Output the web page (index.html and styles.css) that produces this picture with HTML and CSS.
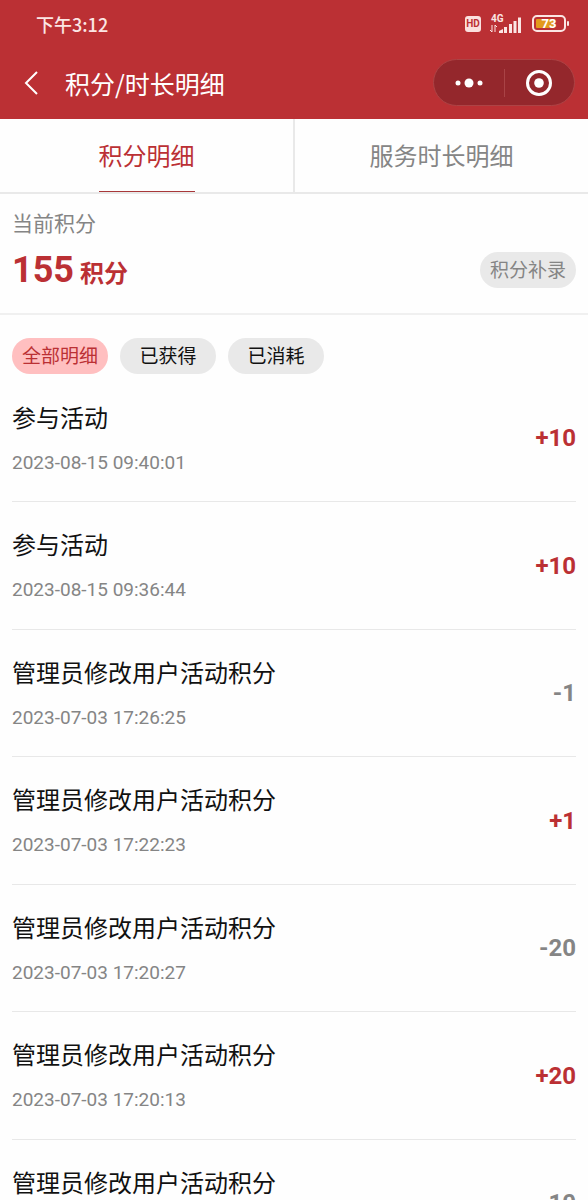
FILE: index.html
```html
<!DOCTYPE html>
<html lang="zh-CN">
<head>
<meta charset="utf-8">
<meta name="viewport" content="width=device-width, initial-scale=1">
<title>积分/时长明细</title>
<link rel="stylesheet" href="styles.css">
</head>
<body>
<div class="app">
  <header class="header">
    <div class="status">
      <span class="time">下午3:12</span>
      <div class="indicators">
        <span class="hd">HD</span>
        <svg class="signal" width="34" height="22" viewBox="0 0 34 22" role="img" aria-label="4G">
          <text class="signal-label" x="2" y="9">4G</text>
          <path d="M3 12v7M1 17l2 2M6 19v-7l2 2" fill="none" stroke="currentColor" stroke-width="1"/>
          <path d="M10 20v-2l4-2v4zM15 20v-6h3v6zM20 20v-9h3v9zM24.500 20v-12h3v12zM29 20v-15.500h3v15.500z" fill="currentColor"/>
        </svg>
        <svg class="battery" width="38" height="20" viewBox="0 0 38 20" role="img" aria-label="73%">
          <rect x="2" y="2" width="32" height="15" rx="4" fill="none" stroke="currentColor" stroke-width="2"/>
          <rect x="5" y="5" width="18" height="9" rx="1" fill="#e39a1c"/>
          <rect x="36" y="7" width="2" height="5" rx="1" fill="currentColor"/>
          <text class="battery-label" x="18" y="14" text-anchor="middle">73</text>
        </svg>
      </div>
    </div>
    <div class="nav">
      <button class="back" type="button" aria-label="返回">
        <svg width="16" height="26" viewBox="0 0 16 26"><path d="M14 2L3 13l11 11" fill="none" stroke="currentColor" stroke-width="2"/></svg>
      </button>
      <h1 class="title">积分/时长明细</h1>
      <div class="capsule">
        <button class="capsule-btn" type="button" aria-label="更多">
          <svg width="30" height="10" viewBox="0 0 30 10" fill="currentColor"><circle cx="4" cy="5" r="2.500"/><circle cx="15" cy="5" r="4.500"/><circle cx="26" cy="5" r="2.500"/></svg>
        </button>
        <button class="capsule-btn" type="button" aria-label="关闭">
          <svg width="28" height="28" viewBox="0 0 28 28"><circle cx="14" cy="14" r="11.500" fill="none" stroke="currentColor" stroke-width="3"/><circle cx="14" cy="14" r="4.800" fill="currentColor"/></svg>
        </button>
      </div>
    </div>
  </header>

  <nav class="tabs">
    <button class="tab active" type="button"><span class="tab-label">积分明细</span></button>
    <button class="tab" type="button"><span class="tab-label">服务时长明细</span></button>
  </nav>

  <section class="summary">
    <div>
      <div class="summary-label">当前积分</div>
      <div class="total"><span class="total-num">155</span> 积分</div>
    </div>
    <button class="pill muted" type="button">积分补录</button>
  </section>

  <div class="filters">
    <button class="pill selected" type="button">全部明细</button>
    <button class="pill" type="button">已获得</button>
    <button class="pill" type="button">已消耗</button>
  </div>

  <ul class="list">
    <li class="row"><div class="info"><div class="name">参与活动</div><time class="date">2023-08-15 09:40:01</time></div><span class="amount plus">+10</span></li>
    <li class="row"><div class="info"><div class="name">参与活动</div><time class="date">2023-08-15 09:36:44</time></div><span class="amount plus">+10</span></li>
    <li class="row"><div class="info"><div class="name">管理员修改用户活动积分</div><time class="date">2023-07-03 17:26:25</time></div><span class="amount">-1</span></li>
    <li class="row"><div class="info"><div class="name">管理员修改用户活动积分</div><time class="date">2023-07-03 17:22:23</time></div><span class="amount plus">+1</span></li>
    <li class="row"><div class="info"><div class="name">管理员修改用户活动积分</div><time class="date">2023-07-03 17:20:27</time></div><span class="amount">-20</span></li>
    <li class="row"><div class="info"><div class="name">管理员修改用户活动积分</div><time class="date">2023-07-03 17:20:13</time></div><span class="amount plus">+20</span></li>
    <li class="row"><div class="info"><div class="name">管理员修改用户活动积分</div></div><span class="amount">-10</span></li>
  </ul>
</div>
</body>
</html>
```
FILE: styles.css
```css
* {
  box-sizing: border-box;
}

body {
  margin: 0;
  background: #fefefe;
  color: #111;
  font-family: Roboto, "Noto Sans CJK SC", sans-serif;
}

button {
  margin: 0;
  padding: 0;
  border: 0;
  background: none;
  color: inherit;
  font: inherit;
}

svg {
  display: block;
}

.app {
  display: flex;
  flex-direction: column;
  height: 100vh;
  overflow: hidden;
}

.header {
  flex: none;
  background: #bb3034;
  color: #fff;
}

.status {
  display: flex;
  align-items: center;
  justify-content: space-between;
  height: 48px;
  padding: 0 19px 0 36px;
  color: #fbe6e4;
}

.time {
  font-family: "Noto Sans CJK SC", sans-serif;
  font-size: 18px;
  font-weight: 500;
}

.indicators {
  display: flex;
  align-items: center;
  gap: 8px;
}

.hd {
  width: 16px;
  border-radius: 3px;
  background: #fbe0de;
  color: #bb3034;
  font-size: 10px;
  font-weight: 700;
  line-height: 16px;
  text-align: center;
}

.signal-label {
  fill: currentColor;
  font-size: 10px;
  font-weight: 700;
}

.battery-label {
  fill: #fff;
  font-size: 13px;
  font-weight: 700;
}

.nav {
  display: flex;
  align-items: center;
  height: 71px;
  padding: 0 13px 2px 23px;
}

.back {
  width: 42px;
}

.title {
  flex: 1;
  margin: 0;
  font-family: "Noto Sans CJK SC", sans-serif;
  font-size: 25px;
  font-weight: 400;
  line-height: 36px;
}

.capsule {
  display: flex;
  align-items: center;
  width: 142px;
  height: 47px;
  border: 1px solid #ad4345;
  border-radius: 24px;
  background: #94272c;
}

.capsule-btn {
  display: grid;
  flex: 1;
  place-items: center;
  height: 28px;
}

.capsule-btn + .capsule-btn {
  border-left: 1px solid #a94346;
}

.tabs {
  display: flex;
  flex: none;
  height: 75px;
  border-bottom: 2px solid #e9e9e9;
}

.tab {
  display: flex;
  flex: 1;
  justify-content: center;
  color: #858585;
  font-size: 24px;
}

.tab + .tab {
  border-left: 2px solid #e9e9e9;
}

.tab-label {
  height: 100%;
  padding-top: 4px;
  line-height: 68px;
}

.active .tab-label {
  border-bottom: 1px solid #a8383a;
}

.active {
  color: #bb3034;
}

.summary {
  display: flex;
  flex: none;
  align-items: flex-start;
  justify-content: space-between;
  height: 121px;
  padding: 16px 12px 0;
  border-bottom: 2px solid #f0f0f0;
}

.summary-label {
  margin-bottom: 12px;
  color: #858585;
  font-size: 21px;
  line-height: 28px;
}

.total {
  color: #bb3034;
  font-size: 24px;
  font-weight: 700;
  line-height: 40px;
}

.total-num {
  font-size: 36px;
}

.pill {
  width: 96px;
  height: 36px;
  padding-top: 2px;
  border-radius: 18px;
  background: #e9e9e9;
  font-size: 19px;
  line-height: 34px;
}

.muted {
  margin-top: 42px;
  color: #858585;
}

.selected {
  background: #ffbfc0;
  color: #bb3034;
}

.filters {
  display: flex;
  flex: none;
  gap: 12px;
  padding: 23px 12px 1px;
}

.list {
  flex: 1;
  min-height: 0;
  margin: 0;
  padding: 0 12px;
  overflow: hidden;
  list-style: none;
}

.row {
  display: flex;
  align-items: center;
  justify-content: space-between;
  height: 127px;
  border-bottom: 1px solid #e8e8e8;
}

.row:nth-child(even) {
  height: 128px;
}

.info {
  display: flex;
  flex-direction: column;
  gap: 16px;
  align-self: flex-start;
  padding-top: 28px;
}

.name {
  font-size: 24px;
  line-height: 32px;
}

.date {
  color: #858585;
  font-size: 19px;
  line-height: 24px;
}

.amount {
  color: #858585;
  font-size: 24px;
  font-weight: 700;
}

.plus {
  color: #bb3034;
}
```
